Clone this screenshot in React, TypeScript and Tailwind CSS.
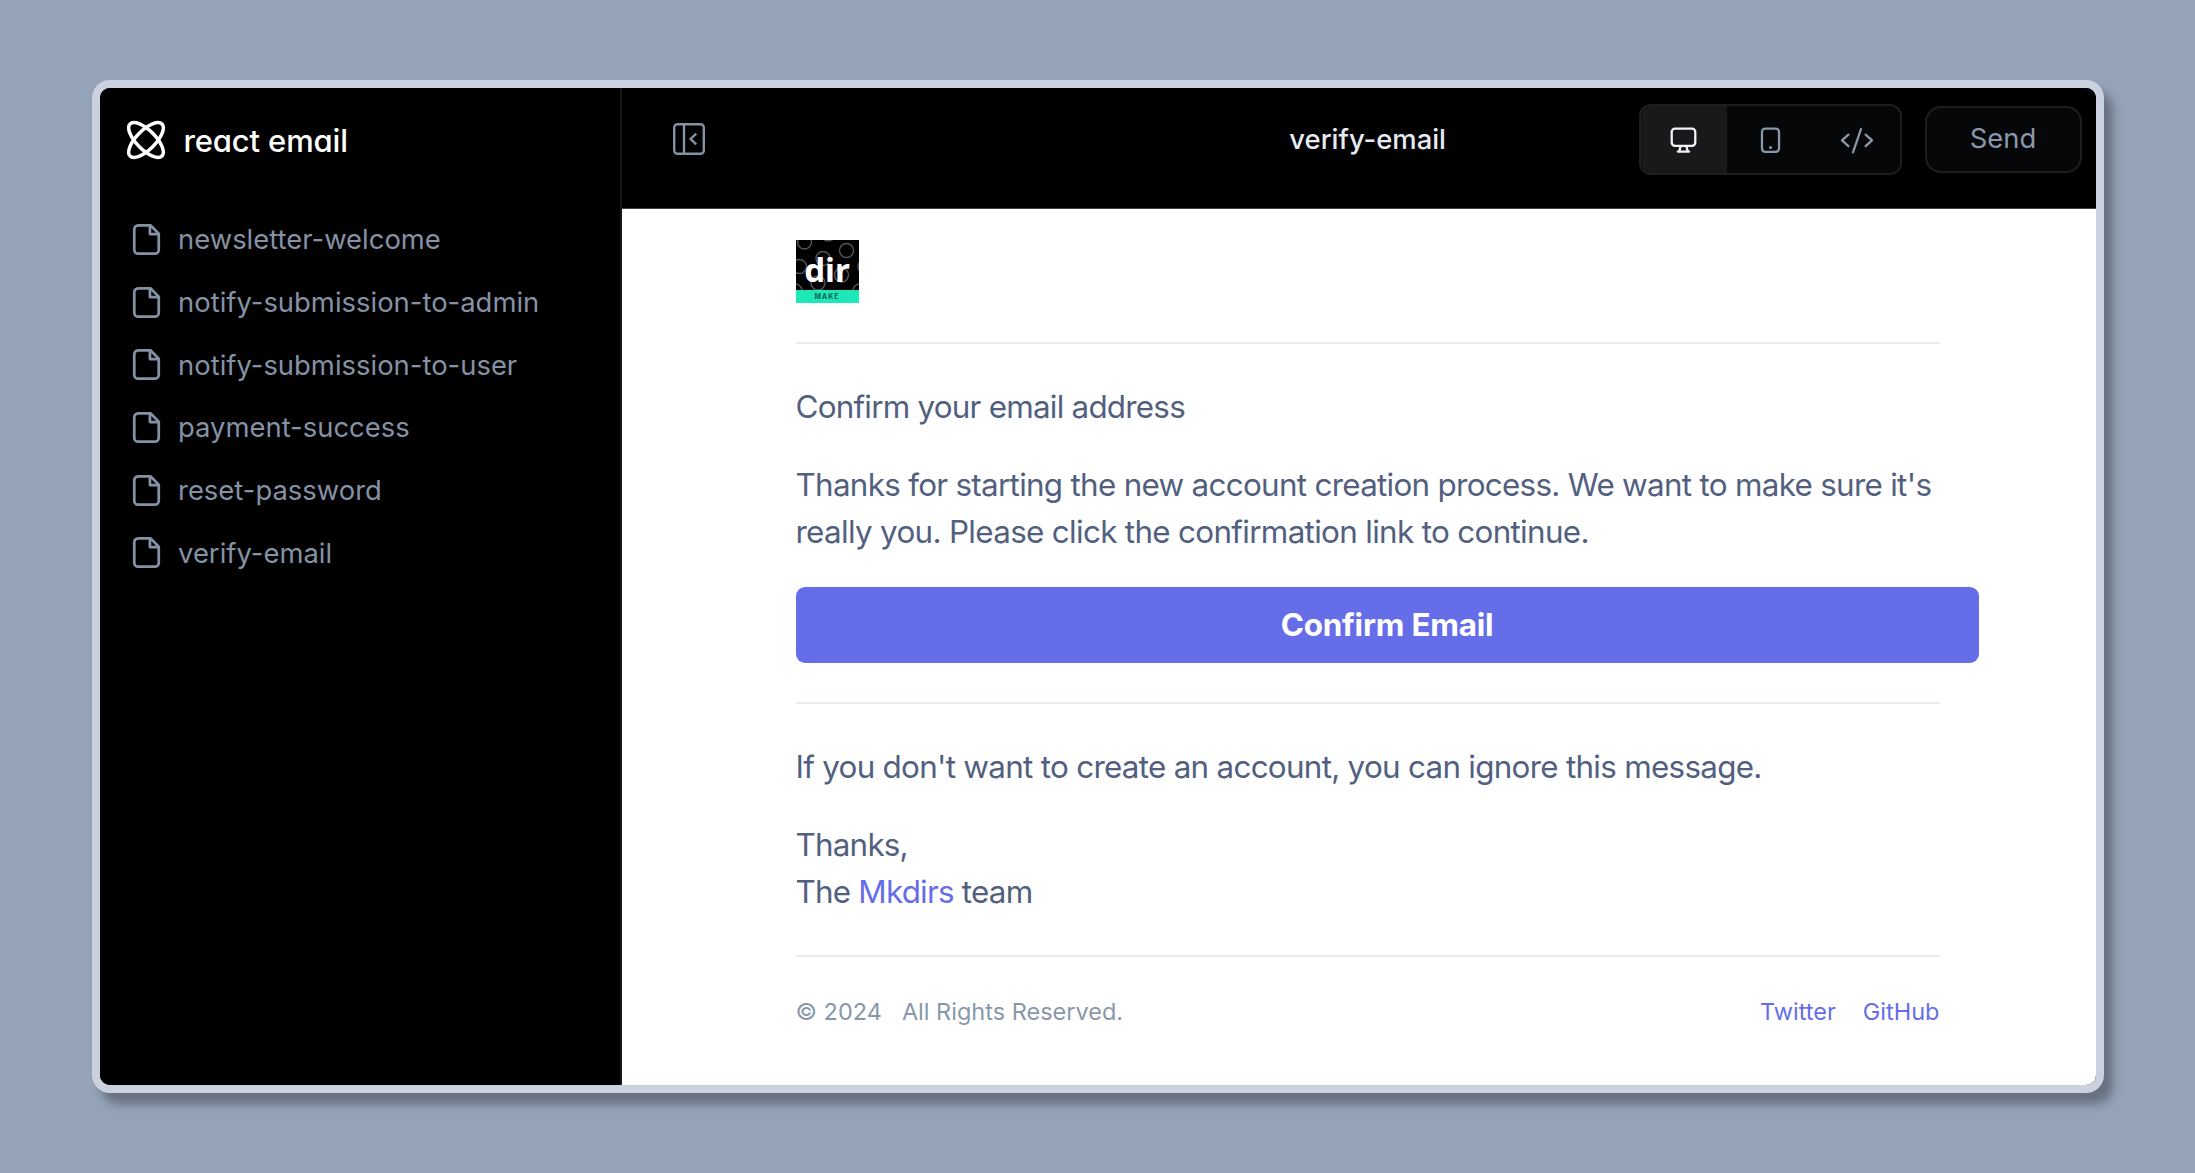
const emails = [
  "newsletter-welcome",
  "notify-submission-to-admin",
  "notify-submission-to-user",
  "payment-success",
  "reset-password",
  "verify-email",
];

function AtomLogo() {
  return (
    <svg width="40" height="40" viewBox="-20 -20 40 40" fill="none" stroke="#fff" strokeWidth="3.5">
      <ellipse rx="22.6" ry="9.5" transform="rotate(45)" />
      <ellipse rx="22.6" ry="9.5" transform="rotate(-45)" />
    </svg>
  );
}

function FileIcon() {
  return (
    <svg
      className="shrink-0"
      width="47"
      height="47"
      viewBox="0 0 24 24"
      fill="none"
      stroke="currentColor"
      strokeWidth="1.4"
      strokeLinecap="round"
      strokeLinejoin="round"
    >
      <path d="M7.75 19.25H16.25C17.3546 19.25 18.25 18.3546 18.25 17.25V9L14 4.75H7.75C6.64543 4.75 5.75 5.64543 5.75 6.75V17.25C5.75 18.3546 6.64543 19.25 7.75 19.25Z" />
      <path d="M18 9.25H13.75V5" />
    </svg>
  );
}

function CollapseIcon() {
  return (
    <svg width="34" height="34" viewBox="0 0 34 34" fill="none" stroke="currentColor" strokeWidth="2.4">
      <rect x="2.2" y="2.2" width="29.6" height="29.6" rx="3.4" />
      <path d="M12 2.2V31.8M24.2 11.6L18.6 17L24.2 22.4" />
    </svg>
  );
}

function DesktopIcon() {
  return (
    <svg width="39" height="39" viewBox="0 0 24 24" fill="none" stroke="currentColor" strokeWidth="1.4" strokeLinejoin="round" strokeLinecap="round">
      <rect x="4.75" y="4.75" width="14.5" height="10.5" rx="2" />
      <path d="M10.2 15.5L9.4 18.7M13.8 15.5L14.6 18.7M8.5 18.8H15.5" />
    </svg>
  );
}

function PhoneIcon() {
  return (
    <svg width="39" height="39" viewBox="0 0 24 24" fill="none" stroke="currentColor" strokeWidth="1.4">
      <rect x="6.75" y="4.75" width="10.5" height="14.2" rx="2" />
      <circle cx="12" cy="16.3" r="0.95" fill="currentColor" stroke="none" />
    </svg>
  );
}

function CodeIcon() {
  return (
    <svg width="36" height="30" viewBox="0 0 36 30" fill="none" stroke="currentColor" strokeWidth="2.3" strokeLinecap="round" strokeLinejoin="round">
      <path d="M9.4 8.6L3 14.4L9.4 20.2M26.6 8.6L33 14.4L26.6 20.2M22 3L14 26.4" />
    </svg>
  );
}

function DirLogo() {
  return (
    <div className="relative flex h-[63px] w-[63px] flex-col overflow-hidden bg-black">
      <svg className="absolute inset-0" width="63" height="50" viewBox="0 0 63 50" fill="none" stroke="#565656" strokeWidth="1.4">
        <circle cx="8.5" cy="2" r="7" />
        <circle cx="50.5" cy="10.5" r="7" />
        <circle cx="27" cy="18.5" r="7" />
        <circle cx="3.5" cy="26.5" r="7" />
        <circle cx="45.5" cy="35" r="7" />
        <circle cx="22" cy="43" r="7" />
        <circle cx="-1" cy="51" r="7" />
        <circle cx="64" cy="51" r="7" />
        <circle cx="69" cy="26.5" r="7" />
        <circle cx="32" cy="-6" r="7" />
      </svg>
      <div className="relative flex h-[50px] justify-center pt-[10px] font-['Noto_Sans'] text-[33px] leading-[40px] font-bold text-white">
        dir
      </div>
      <div className="relative flex h-[13px] items-center justify-center bg-[#1de9b6] pb-px font-['Inter'] text-[7px] font-bold tracking-[1px] text-[#0d5f52]">
        MAKE
      </div>
    </div>
  );
}

function Sidebar() {
  return (
    <aside className="flex w-[522px] shrink-0 flex-col border-r-2 border-[#151618] bg-black">
      <div className="flex h-[104px] items-center gap-[18px] pl-[26px]">
        <AtomLogo />
        <span className="pt-[3px] text-[31px] font-medium tracking-[-0.15px] text-white [font-feature-settings:'cv11']">
          react email
        </span>
      </div>
      <nav className="mt-[16px] flex flex-col text-[27.4px] text-[#8592a5]">
        {emails.map((name) => (
          <a key={name} className="flex h-[62.7px] items-center gap-[8.5px] pl-[23px]">
            <FileIcon />
            <span className="pt-px tracking-[0.02px] whitespace-nowrap">{name}</span>
          </a>
        ))}
      </nav>
    </aside>
  );
}

function Topbar() {
  return (
    <header className="flex h-[121px] shrink-0 items-start border-b border-[#3c434e] bg-black">
      <div className="flex h-[102px] flex-1 items-center pl-[50px] text-[#8592a5]">
        <CollapseIcon />
      </div>
      <h1 className="flex h-[102px] items-center pt-px text-[27.4px] font-medium text-[#e6ebf3]">verify-email</h1>
      <div className="flex h-[102px] w-[649.5px] items-center justify-end gap-[23px] pr-[14px] text-[#8b98ab]">
        <div className="flex h-[71px] w-[263px] overflow-hidden rounded-[12px] border-2 border-[#1d1e20] bg-[#060709]">
          <button className="flex w-[86px] items-center justify-center bg-[#18191b] pt-[3px] text-[#f1f5f9]">
            <DesktopIcon />
          </button>
          <button className="flex w-[87px] items-center justify-center pt-[3px]">
            <PhoneIcon />
          </button>
          <button className="flex flex-1 items-center justify-center pt-[3px]">
            <CodeIcon />
          </button>
        </div>
        <button className="flex h-[67px] w-[157px] items-center justify-center rounded-[16px] border-2 border-[#1d1e20] bg-[#060709] text-[27.4px]">
          Send
        </button>
      </div>
    </header>
  );
}

function EmailBody() {
  return (
    <main className="flex flex-1 flex-col bg-white pt-[31px] pl-[174px] text-[31.4px] leading-[47px] text-[#525f7f]">
      <DirLogo />
      <hr className="mt-[39px] w-[1144px] border-t-2 border-[#e6ebf1]" />
      <p className="mt-[40px] tracking-[-0.77px]">Confirm your email address</p>
      <p className="mt-[31px] tracking-[-0.71px] whitespace-nowrap">
        Thanks for starting the new account creation process. We want to make sure it's
        <br />
        <span className="tracking-[-0.68px]">really you. Please click the confirmation link to continue.</span>
      </p>
      <a className="mt-[31px] flex h-[76px] w-[1183px] items-center justify-center rounded-[9px] bg-[#656ee8] font-bold tracking-[-0.2px] text-white">
        Confirm Email
      </a>
      <hr className="mt-[39px] w-[1144px] border-t-2 border-[#e6ebf1]" />
      <p className="mt-[40px] tracking-[-0.72px]">If you don't want to create an account, you can ignore this message.</p>
      <p className="mt-[31px] tracking-[-0.78px]">
        Thanks,
        <br />
        The <a className="text-[#656ee8]">Mkdirs</a> team
      </p>
      <hr className="mt-[39px] w-[1144px] border-t-2 border-[#e6ebf1]" />
      <footer className="mt-[31px] flex w-[1144px] items-center text-[23.5px] text-[#8898aa]">
        <span>© 2024</span>
        <span className="ml-[20px]">All Rights Reserved.</span>
        <span className="ml-auto flex gap-[27px] text-[#656ee8]">
          <a>Twitter</a>
          <a>GitHub</a>
        </span>
      </footer>
    </main>
  );
}

export default function App() {
  return (
    <div className="flex h-[1173px] w-[2195px] items-start bg-[#94a3b8] pt-[80px] pl-[91.5px] font-['Inter',sans-serif]">
      <div className="h-[1013px] w-[2012px] rounded-[18px] bg-[#cbd1de] p-[8px] shadow-[9px_11px_10px_rgba(0,0,0,0.3)]">
        <div className="flex h-full overflow-hidden rounded-[10px] bg-black">
          <Sidebar />
          <div className="flex min-w-0 flex-1 flex-col">
            <Topbar />
            <EmailBody />
          </div>
        </div>
      </div>
    </div>
  );
}
